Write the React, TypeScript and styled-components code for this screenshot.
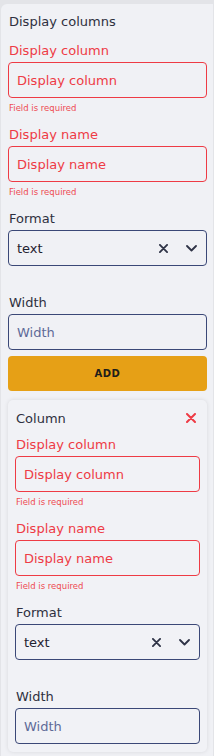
import React from 'react';
import styled, { createGlobalStyle } from 'styled-components';

const GlobalStyle = createGlobalStyle`
  body {
    margin: 0;
    background: #e3e4e8;
    font-family: 'DejaVu Sans', 'Noto Sans', sans-serif;
  }
`;

const Panel = styled.div`
  margin: 4px 0 0 1px;
  width: 212px;
  box-sizing: border-box;
  padding: 8px 6px 0 7px;
  background: #f0f1f5;
  border-radius: 6px 0 0 0;
  min-height: 752px;
`;

const Title = styled.div`
  font-size: 13px;
  line-height: 18px;
  color: #2e3040;
  margin: 1px 0 12px 1px;
`;

const FieldWrap = styled.div<{ $last?: boolean }>`
  display: flex;
  flex-direction: column;
  margin-bottom: ${({ $last }) => ($last ? '7px' : '13px')};
`;

const Label = styled.label<{ $error?: boolean }>`
  font-size: 13px;
  line-height: 16px;
  color: ${({ $error }) => ($error ? '#ee3b45' : '#2e3040')};
  margin: 0 0 3px 1px;
`;

const Input = styled.input<{ $error?: boolean }>`
  box-sizing: border-box;
  height: 36px;
  width: 100%;
  border: 1px solid ${({ $error }) => ($error ? '#ee3b45' : '#3b4877')};
  border-radius: 4px;
  background: transparent;
  padding: 0 8px;
  font-family: inherit;
  font-size: 13px;
  outline: none;
  &::placeholder {
    color: ${({ $error }) => ($error ? '#ee3b45' : '#5e6a98')};
  }
`;

const ErrorText = styled.div`
  font-size: 8.5px;
  line-height: 12px;
  height: 12px;
  margin: 4px 0 0 1px;
  color: #ee4a52;
`;

const SelectBox = styled.div`
  box-sizing: border-box;
  height: 36px;
  display: flex;
  align-items: center;
  border: 1px solid #3b4877;
  border-radius: 4px;
  padding: 0 8px;
`;

const SelectValue = styled.span`
  flex: 1;
  font-size: 13px;
  color: #1f2230;
`;

const IconSlot = styled.span`
  display: flex;
  align-items: center;
  justify-content: center;
  width: 14px;
  margin-left: 14px;
`;

const AddButton = styled.button`
  display: block;
  width: 100%;
  height: 35px;
  margin: -1px 0 9px;
  border: none;
  border-radius: 4px;
  background: #e6a016;
  font-family: inherit;
  font-size: 10px;
  font-weight: bold;
  letter-spacing: 0.5px;
  color: #1f1d1a;
`;

const Card = styled.div`
  background: #f1f2f6;
  border-radius: 5px;
  box-shadow: 0 0 4px rgba(0, 0, 0, 0.1);
  padding: 8px 7px 1px 7px;
`;

const CardHeader = styled.div`
  display: flex;
  align-items: center;
  justify-content: space-between;
  height: 20px;
  margin: 0 4px 9px 1px;
  font-size: 13px;
  color: #2e3040;
`;

const Cross = ({ color, size = 9 }: { color: string; size?: number }) => (
  <svg width={size} height={size} viewBox="0 0 10 10">
    <path d="M1 1L9 9M9 1L1 9" stroke={color} strokeWidth="2" strokeLinecap="round" />
  </svg>
);

const Chevron = () => (
  <svg width="11" height="7" viewBox="0 0 11 7">
    <path d="M1 1L5.5 5.5L10 1" stroke="#2e3346" strokeWidth="1.8" fill="none" strokeLinecap="round" strokeLinejoin="round" />
  </svg>
);

function TextField({ label, error, last }: { label: string; error?: boolean; last?: boolean }) {
  return (
    <FieldWrap $last={last}>
      <Label $error={error}>{label}</Label>
      <Input $error={error} placeholder={label} />
      {!last && <ErrorText>{error ? 'Field is required' : ''}</ErrorText>}
    </FieldWrap>
  );
}

function FormatField() {
  return (
    <FieldWrap>
      <Label>Format</Label>
      <SelectBox>
        <SelectValue>text</SelectValue>
        <IconSlot>
          <Cross color="#2e3346" />
        </IconSlot>
        <IconSlot>
          <Chevron />
        </IconSlot>
      </SelectBox>
      <ErrorText />
    </FieldWrap>
  );
}

function ColumnFields() {
  return (
    <>
      <TextField label="Display column" error />
      <TextField label="Display name" error />
      <FormatField />
      <TextField label="Width" last />
    </>
  );
}

export default function App() {
  return (
    <>
      <GlobalStyle />
      <Panel>
        <Title>Display columns</Title>
        <ColumnFields />
        <AddButton>ADD</AddButton>
        <Card>
          <CardHeader>
            <span>Column</span>
            <Cross color="#ee3b45" size={10} />
          </CardHeader>
          <ColumnFields />
        </Card>
      </Panel>
    </>
  );
}
